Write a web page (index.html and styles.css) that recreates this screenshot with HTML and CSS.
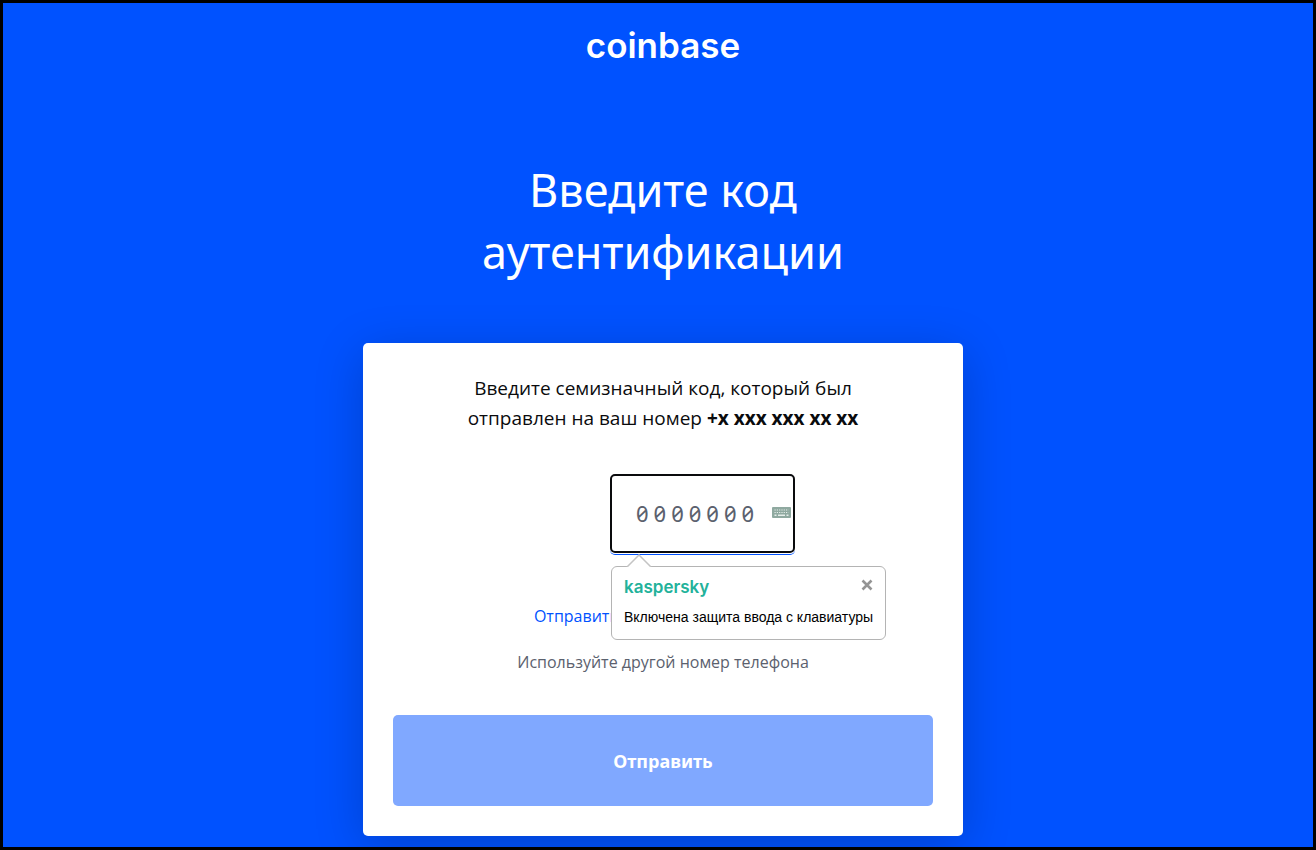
FILE: index.html
```html
<!DOCTYPE html>
<html lang="ru">
<head>
    <meta charset="UTF-8">
    <meta name="viewport" content="width=device-width, initial-scale=1.0">
    <title>Coinbase</title>
    <link rel="stylesheet" href="styles.css">
</head>
<body>
    <div class="page">
        <header class="header">
            <a class="logo" href="#">coinbase</a>
        </header>
        <main class="main">
            <h1 class="title">Введите код аутентификации</h1>
            <form class="card">
                <label class="message" for="code">Введите семизначный код, который был отправлен на ваш номер <strong>+x xxx xxx xx xx</strong></label>
                <div class="code-row">
                    <div class="code-field">
                        <input class="code-input" type="text" id="code" name="code" maxlength="7" placeholder="0000000" autocomplete="off">
                        <svg class="keyboard" viewBox="0 0 19 11" width="19" height="11" aria-hidden="true">
                            <rect width="19" height="11" rx="1" fill="#8fa9a0"/>
                            <path d="M2.5 3h14M2.5 5.5h14" stroke="#e6eeea" stroke-width="1.2" stroke-dasharray="1.2 1.1"/>
                            <path d="M2.5 8.2h2M6 8.2h7M14.5 8.2h2" stroke="#e6eeea" stroke-width="1.4"/>
                        </svg>
                        <div class="tooltip" role="status">
                            <svg class="tooltip-arrow" viewBox="0 0 26 13" width="26" height="13" aria-hidden="true">
                                <path d="M1 13L13 1L25 13" fill="#fff" stroke="#c4c4c4" stroke-width="1.5"/>
                            </svg>
                            <div class="tooltip-head">
                                <span class="tooltip-logo">kaspersky</span>
                                <button class="tooltip-close" type="button" aria-label="Закрыть">
                                    <svg viewBox="0 0 12 12" width="12" height="12">
                                        <path d="M1.5 1.5l9 9M10.5 1.5l-9 9" stroke="#949494" stroke-width="2.6"/>
                                    </svg>
                                </button>
                            </div>
                            <p class="tooltip-text">Включена защита ввода с клавиатуры</p>
                        </div>
                    </div>
                </div>
                <div class="links">
                    <a class="link-resend" href="#">Отправить код повторно по СМС</a>
                    <a class="link-phone" href="#">Используйте другой номер телефона</a>
                </div>
                <button class="submit" type="submit" disabled>Отправить</button>
            </form>
        </main>
    </div>
</body>
</html>
```
FILE: styles.css
```css
* {
    box-sizing: border-box;
}
body {
    margin: 0;
    font-family: "Open Sans", "Noto Sans", sans-serif;
    color: #0a0b0d;
}
a {
    text-decoration: none;
}
.page {
    min-height: 100vh;
    padding: 20px 0 11px 10px;
    border: 3px solid #000;
    background: #0052ff;
}
.header {
    display: flex;
    justify-content: center;
}
.logo {
    font-family: Inter, sans-serif;
    font-size: 35px;
    font-weight: 600;
    line-height: 44px;
    color: #fff;
}
.main {
    display: flex;
    flex-direction: column;
    align-items: center;
    padding-top: 92px;
}
.title {
    max-width: 420px;
    margin: 0 0 60px;
    font-family: "Noto Sans", sans-serif;
    font-size: 45px;
    font-weight: 400;
    line-height: 62px;
    text-align: center;
    color: #fff;
}
.card {
    display: flex;
    flex-direction: column;
    width: 100%;
    max-width: 600px;
    padding: 30px;
    border-radius: 5px;
    background: #fff;
    box-shadow: 0 10px 50px rgba(0, 0, 0, 0.2);
}
.message {
    max-width: 400px;
    margin: 0 auto;
    font-size: 19px;
    line-height: 30px;
    text-align: center;
}
.code-row {
    display: flex;
    justify-content: center;
    padding: 41px 0 49px 79px;
}
.code-field {
    position: relative;
    display: flex;
    padding-bottom: 1px;
    border-bottom: 1px solid #0052ff;
    border-radius: 5px;
}
.code-input {
    width: 185px;
    height: 79px;
    padding: 0 16px 2px 24px;
    border: 2px solid #0a0b0d;
    border-radius: 5px;
    outline: none;
    font-family: "Noto Sans", sans-serif;
    font-size: 22px;
    font-feature-settings: "zero" 1;
    letter-spacing: 5px;
}
.code-input::placeholder {
    color: #5b616e;
    opacity: 1;
}
.keyboard {
    position: absolute;
    top: 33px;
    right: 4px;
}

/* keyboard protection popup */
.tooltip {
    position: absolute;
    top: 92px;
    left: 1px;
    z-index: 1;
    width: max-content;
    padding: 10px 12px;
    border: 1px solid #b4b4b4;
    border-radius: 6px;
    background: #fff;
}
.tooltip-arrow {
    position: absolute;
    top: -13px;
    left: 14px;
}
.tooltip-head {
    display: flex;
    justify-content: space-between;
    align-items: flex-start;
}
.tooltip-logo {
    font-family: Inter, sans-serif;
    font-size: 17px;
    font-weight: 600;
    line-height: 20px;
    color: #23b29b;
}
.tooltip-close {
    display: flex;
    padding: 2px 0;
    border: none;
    background: none;
    cursor: pointer;
}
.tooltip-text {
    margin: 10px 0 2px;
    font-family: "Liberation Sans", Arial, sans-serif;
    font-size: 14px;
    line-height: 20px;
    color: #000;
}
.links {
    display: flex;
    flex-direction: column;
    align-items: center;
    gap: 22px;
    margin-bottom: 41px;
    font-size: 16px;
    line-height: 24px;
}
.link-resend {
    color: #0052ff;
}
.link-phone {
    color: #5b616e;
}
.submit {
    padding: 31px 30px 29px;
    border: none;
    border-radius: 5px;
    background: #80a8ff;
    color: #fff;
    font-family: "Noto Sans", sans-serif;
    font-size: 18px;
    font-weight: 700;
    line-height: 31px;
}
```
